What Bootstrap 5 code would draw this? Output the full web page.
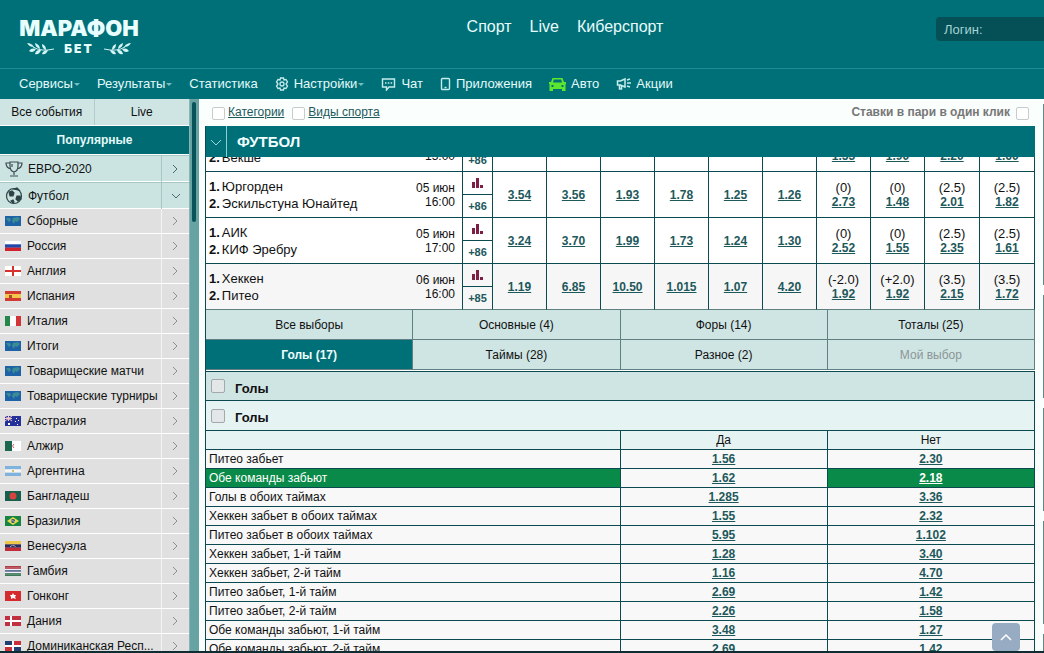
<!DOCTYPE html>
<html lang="ru">
<head>
<meta charset="utf-8">
<meta name="viewport" content="width=device-width, initial-scale=1">
<title>Марафон Бет</title>
<link rel="stylesheet" href="https://cdn.jsdelivr.net/npm/bootstrap@5.3.0/dist/css/bootstrap.min.css">
<style>
:root{--teal:#007078;--line:#0b4a50;--pale:#cfe5e4;--link:#1d585b}
body{font:13px/16px "Liberation Sans",Arial,sans-serif;color:#111;background:#fafefd}
a{color:inherit}
.shell{height:100vh;border-bottom:2px solid #0f2c33}
.top-bar{background:var(--teal);height:69px;border-bottom:1px solid #238b91;color:#e8fbfb}
.logo{padding:14px 0 0 18px;width:140px;font-family:Inter,"Open Sans",sans-serif;font-weight:900;color:#e9ffff}
.logo-name{font-size:22px;line-height:28px}
.logo-sub{font-size:12px;line-height:8px;gap:9px}
.logo-sub span{letter-spacing:2px}
.top-links{font-size:16px;line-height:20px;padding:17px 0 0 54px;gap:18px}
.login-wrap{padding-top:17px}
.login{background:#055057;border:0;border-radius:4px 0 0 4px;width:108px;height:24px;padding:0 8px;color:#a6d3d5;font-size:13px}
.login::placeholder{color:#a6d3d5;opacity:1}
.menu{background:var(--teal);height:30px;color:#e4fafa;font-size:13px;padding-left:19px;gap:17px}
.menu svg{margin-right:5px}
.caret{width:0;border:3px solid transparent;border-top-color:#6fc0c4;border-bottom:0;margin-left:1px}
.side{width:189px;background:#fff;font-size:12px;color:#111}
.side-tabs{display:grid;grid-template-columns:1fr 1fr;border-bottom:1px solid #fff}
.side-tabs a{background:var(--pale);height:26px}
.side-tabs a:first-child{border-right:1px solid #b3cccd}
.side-head{background:#006b73;color:#e4fafa;height:29px;font-weight:700;border-bottom:1px solid #fff}
.side-row{height:25px;background:#e0e0e0;border-bottom:1px solid #fff}
.side-row.wide{height:27px;background:#cbe4e2;border:0;border-top:1px solid #a9c6c6;box-shadow:inset 0 -1px #fff}
.side-row .go{width:28px;border-left:1px solid #f4f4f4;color:#8b8f90}
.side-row.wide .go{border-color:#a9c6c6;color:#47686c}
.side-row .name{padding-left:6px}
.side-row.wide .name{padding-left:4px}
.flag{width:16px;height:10px;margin-left:5px;flex:none}
.rail{width:10px;background:#68a3a4;border-left:1px solid #8ab5b6;padding:3px 2px}
.thumb{width:4px;height:120px;background:#075359;border-radius:2px}
.content-area{padding:0 8px 0 6px}
.options{height:27px;padding:1px 6px 0 7px;gap:3px;color:#777;font-size:12px}
.options a{color:var(--link)}
.options .next{margin-left:5px}
.options label{padding-bottom:2px}
.options .last{margin-left:3px}
.box{appearance:none;width:13px;height:13px;border:1px solid #c9cccc;border-radius:2px;background:#fff;margin:0}
.box-lg{width:14px;height:14px;border-color:#a4a8a8;background:#e3e7e7}
.board{border-left:1px solid var(--line)}
.sport-head{background:var(--teal);height:31px;color:#f0ffff;font-size:15px;font-weight:700;z-index:1;gap:10px}
.sport-head button{width:21px;border:0;border-right:1px solid #8fd0d2;background:none;color:#9ad7da;padding:0}
.events{table-layout:fixed;margin-top:-31px;border-collapse:separate;border-spacing:0}
.events td{border:solid var(--line);border-width:0 1px 1px 0;height:46px;padding:0;background:#fff;line-height:14px}
.events tr:last-child td{background:#f6f6f6;border-bottom-color:#5f7f80}
.c-more{width:30px}.c-odd{width:54px}.c-total{width:55px}
.teams{line-height:17px;padding:1px 0 0 3px}
.teams b{margin-right:2px}
.when{font-size:12px;padding:4px 7px 0 0;text-align:right}
.odd{color:var(--link);font-weight:700;font-size:12px}
.more span{height:22px}
.more span+a{height:23px;border-top:1px solid var(--line);font-size:11px;font-weight:700;color:var(--link);text-decoration:none}
.tabs{display:grid;grid-template-columns:repeat(4,1fr);border-bottom:1px solid #fff}
.tabs button{height:30px;border:solid #5f7f80;border-width:0 1px 1px 0;background:var(--pale);font-size:12px;padding:0;color:#111}
.tabs button.on{background:var(--teal);color:#f0ffff;font-weight:700}
.tabs button:disabled{color:#8c9696}
.group-head{height:30px;border:solid var(--line);border-width:0 1px 1px 0;font-weight:700;padding-left:5px;background:#e6f3f3}
.group-head.first{border-top-width:1px;background:var(--pale)}
.group-head span{padding:5px 0 0 10px}
.market{table-layout:fixed;border-collapse:separate;border-spacing:0;font-size:12px}
.market td,.market th{height:19px;padding:0 3px;border:solid var(--line);border-width:0 1px 1px 0;background:#f8f8f8;line-height:16px;font-weight:400;white-space:nowrap}
.market th{background:#e6f3f3}
.market .hit{background:#0a8a48;color:#fff}
.market .hit .odd{color:#fff}
.edge{width:1px;margin-top:5px;background:linear-gradient(#5d8a7e,#5d8a7e) 0 0/1px 80px no-repeat,repeating-linear-gradient(#5d8a7e 0 103px,transparent 103px 113px) 0 78px/1px 565px no-repeat}
.up{right:24px;bottom:0;width:28px;height:28px;border:0;border-radius:4px;background:#97abc2;color:#fff;padding:0}
</style>
</head>
<body>
<div class="shell d-flex flex-column overflow-hidden position-relative">
  <header class="top-bar d-flex position-relative flex-shrink-0">
    <div class="logo d-flex flex-column align-items-center text-nowrap">
      <div class="logo-name">МАРАФОН</div>
      <div class="logo-sub d-flex align-items-center">
        <svg width="29" height="13" viewBox="0 0 29 13" fill="#d5f5f5"><g id="laurel"><path d="M1 1c3 0 5 1 7 4-3 0-5-1-7-4zM9 1c3 1 5 3 5 6-3-1-5-3-5-6zM16 2c3 1 4 3 4 6-3-1-4-3-4-6zM3 9c2-3 4-3 7-2-2 3-4 4-7 2zM9 12c1-4 3-4 6-4-1 3-3 5-6 4zM16 12c1-3 3-4 6-4-1 3-3 5-6 4z"/><path d="M7 5q8 5 21 2" fill="none" stroke="#d5f5f5"/></g></svg>
        <span>БЕТ</span>
        <svg width="29" height="13" viewBox="0 0 29 13" fill="#d5f5f5"><use href="#laurel" transform="matrix(-1 0 0 1 29 0)"/></svg>
      </div>
    </div>
    <nav class="top-links d-flex flex-fill justify-content-center">
      <a class="text-decoration-none" href="#">Спорт</a><a class="text-decoration-none" href="#">Live</a><a class="text-decoration-none" href="#">Киберспорт</a>
    </nav>
    <div class="login-wrap"><input class="login" type="text" placeholder="Логин:" aria-label="Логин"></div>
  </header>
  <nav class="menu d-flex align-items-center flex-shrink-0" id="menu"></nav>
  <div class="d-flex flex-fill overflow-hidden">
    <aside class="side flex-shrink-0">
      <div class="side-tabs">
        <a class="text-decoration-none d-flex align-items-center justify-content-center" href="#">Все события</a>
        <a class="text-decoration-none d-flex align-items-center justify-content-center" href="#">Live</a>
      </div>
      <div class="side-head d-flex align-items-center justify-content-center">Популярные</div>
      <div id="sports"></div>
    </aside>
    <div class="rail flex-shrink-0"><div class="thumb"></div></div>
    <main class="content-area flex-fill overflow-hidden">
      <div class="options d-flex align-items-center">
        <input class="box" type="checkbox" id="o1"><label for="o1"><a href="#">Категории</a></label>
        <input class="box next" type="checkbox" id="o2"><label for="o2"><a href="#">Виды спорта</a></label>
        <label class="fw-bold ms-auto" for="o3">Ставки в пари в один клик</label><input class="box last" type="checkbox" id="o3">
      </div>
      <div class="board">
        <div class="sport-head d-flex align-items-center position-relative">
          <button class="align-self-stretch" aria-label="Свернуть"><svg width="12" height="8" fill="none" stroke="currentColor"><path d="M1 1l5 5 5-5"/></svg></button>
          <span>ФУТБОЛ</span>
        </div>
        <table class="events w-100"><colgroup id="cols"></colgroup><tbody id="events"></tbody></table>
        <div class="tabs" id="tabs"></div>
        <div class="group-head first d-flex align-items-center"><input class="box box-lg" type="checkbox" id="g1"><label for="g1"><span class="d-block">Голы</span></label></div>
        <div class="group-head d-flex align-items-center"><input class="box box-lg" type="checkbox" id="g2"><label for="g2"><span class="d-block">Голы</span></label></div>
        <table class="market w-100">
          <thead><tr class="text-center"><th class="w-50"></th><th class="w-25">Да</th><th class="w-25">Нет</th></tr></thead>
          <tbody id="market"></tbody>
        </table>
      </div>
    </main>
    <div class="edge flex-shrink-0"></div>
  </div>
  <button class="up position-absolute" aria-label="Наверх"><svg width="14" height="9" fill="none" stroke="currentColor" stroke-width="1.5"><path d="M2 7l5-5 5 5"/></svg></button>
</div>
<script src="https://cdn.jsdelivr.net/npm/bootstrap@5.3.0/dist/js/bootstrap.bundle.min.js"></script>
<script>
const put = (id, html) => document.getElementById(id).innerHTML = html;
const r = (x, y, w, h, c) => `<rect x="${x}" y="${y}" width="${w}" height="${h}" fill="${c}"/>`;
const bands = (...c) => c.map((k, i) => r(0, i * 10 / c.length, 16, 10 / c.length + .1, k)).join('');
const world = r(0,0,16,10,'#1d62a5') + '<path d="M1 2h4l1 2-2 2-1-1zM8 2l5-1 2 2-3 3-2-1-1 3-2-3z" fill="#3a8b96"/>';
const flags = {
  world,
  ru: bands('#fff','#2147a8','#d2232a'),
  en: r(0,0,16,10,'#fff') + r(0,4,16,2,'#d8302f') + r(7,0,2,10,'#d8302f'),
  es: r(0,0,16,10,'#d13b32') + r(0,3,16,4,'#f4c64a') + r(4,4,3,3,'#a4502e'),
  it: r(0,0,16,10,'#fff') + r(0,0,5,10,'#23884a') + r(11,0,5,10,'#d23438'),
  au: r(0,0,16,10,'#25319a') + '<path d="M0 0l7 5M7 0L0 5M3.500 0v5M0 2.500h7" stroke="#f1c6cf"/><path d="M3 7h2v2H3zM11 2h1v1h-1zM13 4h1v1h-1zM10 5h1v1h-1zM12 8h1v1h-1z" fill="#fff"/>',
  dz: r(0,0,16,10,'#fff') + r(0,0,7,10,'#1d6650') + '<path d="M9 3q-3 2 0 4" fill="none" stroke="#c66"/>',
  ar: bands('#7fb2dc','#f5f5f5','#7fb2dc') + r(7,4,2,2,'#d6bd70'),
  bd: r(0,0,16,10,'#175e4c') + '<circle cx="8" cy="5" r="3.500" fill="#d8433f"/>',
  br: r(0,0,16,10,'#168443') + '<path d="M8 1l6 4-6 4-6-4z" fill="#e6d94a"/><circle cx="8" cy="5" r="2" fill="#264a7c"/><path d="M6 5q2-1 4 1" stroke="#fff" fill="none" stroke-width=".6"/>',
  ve: bands('#edc64a','#2b2a5c','#c22c38') + '<path d="M5 6q3-3 6 0" fill="none" stroke="#eee" stroke-dasharray="1 .6"/>',
  gm: bands('#b23a44','#b23a44','#eef','#34476f','#eef','#3f7a58','#3f7a58'),
  hk: r(0,0,16,10,'#d4292d') + '<path d="M8 2l1 2 2 0-1 2 1 2-3-1-2 1 0-2-1-2 2 0z" fill="#fff"/>',
  dk: r(0,0,16,10,'#c22e42') + r(0,4,16,2,'#fff') + r(5,0,2,10,'#fff'),
  dom: r(0,0,16,10,'#fff') + r(0,0,7,4,'#233f72') + r(9,0,7,4,'#c9303c') + r(0,6,7,4,'#c9303c') + r(9,6,7,4,'#233f72')
};
const chev = '<svg width="7" height="10" fill="none" stroke="currentColor"><path d="M1 1l4 4-4 4"/></svg>';
const down = '<svg width="10" height="7" fill="none" stroke="currentColor"><path d="M1 1l4 4 4-4"/></svg>';
const big = {
  cup: '<svg class="ms-1" width="20" height="18" viewBox="0 0 20 18" fill="none" stroke="#3a4c50" stroke-width="1.200"><path d="M6 2h8v4q0 5-4 6-4-1-4-6zM6 3H2q0 5 5 6M14 3h4q0 5-5 6M10 12v3M6 16h8M8 4v3"/></svg>',
  ball: '<svg class="ms-1" width="20" height="18" viewBox="0 0 20 18" fill="none" stroke="#2f4347" stroke-width="1.200"><circle cx="10" cy="9" r="7.500"/><path d="M5 5l3-1 2 2-1 3-3 0zM13 9l3 0 1 3-3 2-2-2zM10 2l3-1 2 2zM7 14l2-1 1 2-1 1z" fill="#2f4347"/></svg>'
};
const side = (icon, name, arrow, wide) => `<div class="side-row ${wide ? 'wide' : ''} d-flex align-items-stretch"><a class="d-flex align-items-center flex-fill overflow-hidden text-decoration-none text-nowrap" href="#">${icon}<span class="name">${name}</span></a><span class="go d-flex align-items-center justify-content-center flex-shrink-0">${arrow}</span></div>`;
const countries = [['world','Сборные'],['ru','Россия'],['en','Англия'],['es','Испания'],['it','Италия'],['world','Итоги'],['world','Товарищеские матчи'],['world','Товарищеские турниры'],['au','Австралия'],['dz','Алжир'],['ar','Аргентина'],['bd','Бангладеш'],['br','Бразилия'],['ve','Венесуэла'],['gm','Гамбия'],['hk','Гонконг'],['dk','Дания'],['dom','Доминиканская Респ...']];
put('sports', side(big.cup,'ЕВРО-2020',chev,1) + side(big.ball,'Футбол',down,1) +
  countries.map(([f,n]) => side(`<svg class="flag" viewBox="0 0 16 10">${flags[f]}</svg>`, n, chev)).join(''));

const ico = {
  gear: '<svg width="14" height="14" viewBox="0 0 14 14" fill="none" stroke="#c5ecec" stroke-width="1.300"><circle cx="7" cy="7" r="2"/><path d="M5.500 1h3l.5 2 2-.5 1.500 2.500-1.500 2 1.500 2-1.500 2.500-2-.5-.5 2h-3L5 11l-2 .5L1.500 9 3 7 1.500 5 3 2.500 5 3z"/></svg>',
  chat: '<svg width="15" height="14" viewBox="0 0 15 14" fill="none" stroke="#c5ecec" stroke-width="1.400"><path d="M1.500 2h12v8H8l-2.500 3v-3h-4z"/><path d="M4 6h1.500M6.800 6h1.500M9.600 6h1.500" stroke-width="1.600"/></svg>',
  phone: '<svg width="11" height="14" viewBox="0 0 11 14" fill="none" stroke="#c5ecec" stroke-width="1.400"><rect x="1.500" y="1.500" width="8" height="11" rx="1"/><path d="M4.500 10.500h2"/></svg>',
  car: '<svg width="17" height="14" viewBox="0 0 17 14" fill="#5de62e"><path fill-rule="evenodd" d="M3.500 1h10l1.500 4h2v2h-.5v7H13v-2H4v2H.5V7H0V5h2zM4.800 2.500L4 5.500h9l-.8-3zM2.500 8v2h2V8zM12.500 8v2h2V8z"/></svg>',
  horn: '<svg width="15" height="14" viewBox="0 0 15 14" fill="none" stroke="#c5ecec" stroke-width="1.500"><path d="M1.500 4h3L9 2v8L4.500 8h-3zM3.500 8v4h2V9M11 3l3-1M11 6h4M11 9l3 1"/></svg>'
};
put('menu', [['','Сервисы',1],['','Результаты',1],['','Статистика'],['gear','Настройки',1],['chat','Чат'],['phone','Приложения'],['car','Авто'],['horn','Акции']]
  .map(([i,t,c]) => `<a class="d-flex align-items-center text-decoration-none" href="#">${i ? ico[i] : ''}<span>${t}</span>${c ? '<span class="caret"></span>' : ''}</a>`).join(''));

put('cols', '<col><col class="c-more">' + '<col class="c-odd">'.repeat(8) + '<col class="c-total">'.repeat(2));
const odd = v => `<a class="odd" href="#">${v}</a>`;
const bars = '<svg width="11" height="10" fill="#7d1f45"><path d="M0 4h3v6H0zM4 0h3v10H4zM8 7h3v3H8z"/></svg>';
put('events', [
  ['Мальмё','Векше','05 июн','15:00','+86',['','','','','',''],[['(0)','1.53'],['(0)','1.90'],['(2.5)','2.20'],['(2.5)','1.60']]],
  ['Юргорден','Эскильстуна Юнайтед','05 июн','16:00','+86',['3.54','3.56','1.93','1.78','1.25','1.26'],[['(0)','2.73'],['(0)','1.48'],['(2.5)','2.01'],['(2.5)','1.82']]],
  ['АИК','КИФ Эребру','05 июн','17:00','+86',['3.24','3.70','1.99','1.73','1.24','1.30'],[['(0)','2.52'],['(0)','1.55'],['(2.5)','2.35'],['(2.5)','1.61']]],
  ['Хеккен','Питео','06 июн','16:00','+85',['1.19','6.85','10.50','1.015','1.07','4.20'],[['(-2.0)','1.92'],['(+2.0)','1.92'],['(3.5)','2.15'],['(3.5)','1.72']]]
].map(([a,b,d,t,m,o,h]) => `<tr><td><div class="d-flex justify-content-between text-nowrap"><div class="teams"><b>1.</b>${a}<br><b>2.</b>${b}</div><div class="when">${d}<br>${t}</div></div></td>
<td class="more"><span class="d-flex align-items-center justify-content-center">${bars}</span><a class="d-flex align-items-center justify-content-center" href="#">${m}</a></td>` +
  o.map(v => `<td class="text-center">${v && odd(v)}</td>`).join('') + h.map(([k,v]) => `<td class="text-center">${k}<br>${odd(v)}</td>`).join('') + '</tr>').join(''));

put('tabs', ['Все выборы','Основные (4)','Форы (14)','Тоталы (25)','Голы (17)','Таймы (28)','Разное (2)','Мой выбор']
  .map((t,i) => `<button class="${i == 4 ? 'on' : ''}" ${i == 7 ? 'disabled' : ''}>${t}</button>`).join(''));

put('market', [['Питео забьет','1.56','2.30'],['Обе команды забьют','1.62','2.18'],['Голы в обоих таймах','1.285','3.36'],['Хеккен забьет в обоих таймах','1.55','2.32'],['Питео забьет в обоих таймах','5.95','1.102'],['Хеккен забьет, 1-й тайм','1.28','3.40'],['Хеккен забьет, 2-й тайм','1.16','4.70'],['Питео забьет, 1-й тайм','2.69','1.42'],['Питео забьет, 2-й тайм','2.26','1.58'],['Обе команды забьют, 1-й тайм','3.48','1.27'],['Обе команды забьют, 2-й тайм','2.69','1.42']]
  .map(([n,y,z],i) => { const h = i == 1 ? 'hit' : ''; return `<tr><td class="${h}">${n}</td><td class="text-center">${odd(y)}</td><td class="text-center ${h}">${odd(z)}</td></tr>`; }).join(''));
</script>
</body>
</html>
